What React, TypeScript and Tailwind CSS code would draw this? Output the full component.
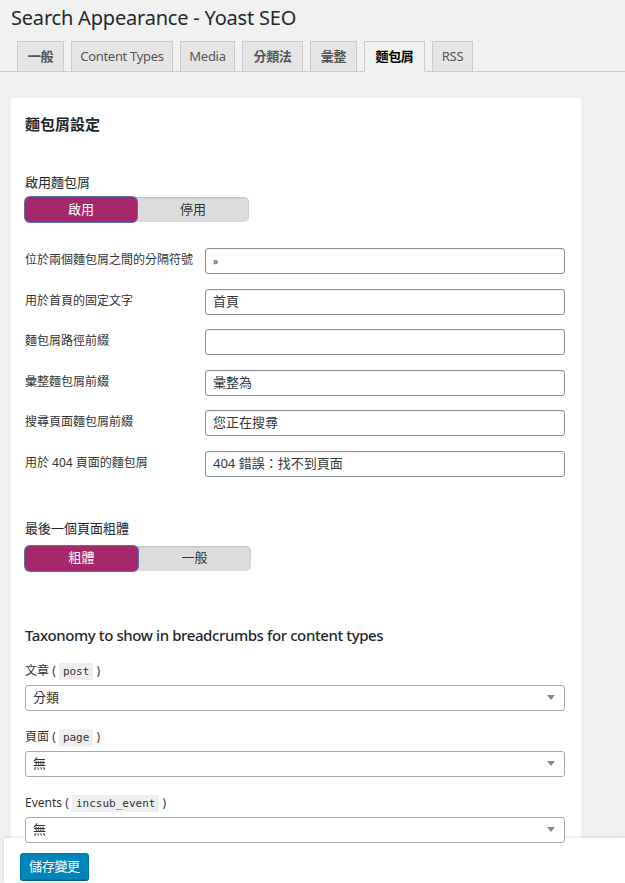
import clsx from 'clsx'

const cjk = "font-['Segoe_UI','Noto_Sans','Noto_Sans_CJK_TC',sans-serif]"

const tabs = [
  { t: '一般', w: 'w-[47px]' },
  { t: 'Content Types', w: 'w-[102px]' },
  { t: 'Media', w: 'w-[55px]' },
  { t: '分類法', w: 'w-[61px]' },
  { t: '彙整', w: 'w-[47px]' },
  { t: '麵包屑', w: 'w-[61px]' },
  { t: 'RSS', w: 'w-[41px]' },
]

const textRows = [
  { label: '位於兩個麵包屑之間的分隔符號', value: '»', small: true },
  { label: '用於首頁的固定文字', value: '首頁' },
  { label: '麵包屑路徑前綴', value: '' },
  { label: '彙整麵包屑前綴', value: '彙整為' },
  { label: '搜尋頁面麵包屑前綴', value: '您正在搜尋' },
  { label: '用於 404 頁面的麵包屑', value: '404 錯誤：找不到頁面' },
]

const selects = [
  { label: '文章', code: 'post', value: '分類' },
  { label: '頁面', code: 'page', value: '無' },
  { label: 'Events', code: 'incsub_event', value: '無' },
]

const Toggle = ({ on, off, width }: { on: string; off: string; width: string }) => (
  <div className={clsx('flex h-[25px] rounded-[5px] bg-[#dcdcdc] text-[13px] shadow-[inset_0_1px_2px_rgba(0,0,0,0.15)]', width)}>
    <div className="flex w-1/2 items-center justify-center rounded-[5px] bg-[#a4286a] text-white shadow-[0_0_0_1px_#5b6fb3]">{on}</div>
    <div className="flex w-1/2 items-center justify-center text-[#333]">{off}</div>
  </div>
)

const App = () => {
  return (
    <div className={clsx('flex h-[883px] flex-col overflow-hidden bg-[#f1f1f1] text-[#23282d]', cjk)}>
      <div className="min-h-0 flex-1">
        <h1 className="pl-[11px] pt-[4px] text-[20px] leading-[27px] font-normal tracking-[-0.2px] text-[#23282d]">Search Appearance - Yoast SEO</h1>
        <div className="mt-[10px] flex gap-[7px] border-b border-[#ccc] pl-[17px]">
          {tabs.map(({ t, w }) => (
            <div
              key={t}
              className={clsx(
                '-mb-px flex h-[31px] items-center justify-center border border-[#ccc] text-[13px] tracking-[-0.3px]',
                w,
                t === '麵包屑' ? 'border-b-[#f1f1f1] bg-[#f1f1f1] font-bold text-black' : 'bg-[#e5e5e5] text-[#555]',
                /[一-龥]/.test(t) && t !== '麵包屑' && 'font-semibold'
              )}
            >
              {t}
            </div>
          ))}
        </div>
        <div className="ml-[11px] mt-[26px] w-[570px] bg-white px-[14px] pt-[16px] pb-[80px]">
          <h2 className="text-[15px] leading-5 font-bold text-[#23282d]">麵包屑設定</h2>
          <div className="mt-[40px] text-[13px] leading-4">啟用麵包屑</div>
          <div className="mt-[7px]">
            <Toggle on="啟用" off="停用" width="w-[224px]" />
          </div>
          <div className="mt-[26px] flex flex-col gap-[14.5px]">
            {textRows.map((r) => (
              <div key={r.label} className="flex items-start">
                <div className="w-[180px] pt-[4px] text-[12px] leading-4 text-[#333]">{r.label}</div>
                <div className="flex h-[26px] w-[360px] items-center rounded-[3px] border border-[#8c8f94] bg-white px-[7px] text-[13px] text-[#32373c] shadow-[inset_0_1px_2px_rgba(0,0,0,0.07)]">
                  <span className={clsx(r.small && 'text-[10px]')}>{r.value}</span>
                </div>
              </div>
            ))}
          </div>
          <div className="mt-[43px] text-[13px] leading-4">最後一個頁面粗體</div>
          <div className="mt-[10px]">
            <Toggle on="粗體" off="一般" width="w-[226px]" />
          </div>
          <h2 className="mt-[54px] text-[15px] leading-5 font-medium tracking-[-0.4px] text-[#23282d]">Taxonomy to show in breadcrumbs for content types</h2>
          <div className="mt-[16px] flex flex-col gap-[16px]">
            {selects.map((s) => (
              <div key={s.code}>
                <div className="text-[12px] leading-[20px] text-[#333]">
                  {s.label} ({' '}
                  <code className="bg-[#eeeeee] px-[4px] py-[2px] font-['DejaVu_Sans_Mono',monospace] text-[11px] text-[#333]">{s.code}</code>{' '}
                  )
                </div>
                <div className="relative z-10 mt-[3px] flex h-[26px] w-[540px] items-center justify-between rounded-[3px] border border-[#aaa] bg-white px-[7px] text-[13px] text-[#333]">
                  <span>{s.value}</span>
                  <svg width="8" height="5" viewBox="0 0 8 5" className="mr-[2px]">
                    <path d="M0 0h8L4 5z" fill="#888" />
                  </svg>
                </div>
              </div>
            ))}
          </div>
        </div>
      </div>
      <div className="relative ml-[4px] flex h-[45px] shrink-0 items-start bg-white pl-[16px] pt-[15px] shadow-[0_-1px_3px_rgba(0,0,0,0.12)]">
        <button className="flex h-[27px] items-center rounded-[3px] border border-[#0073aa] bg-[#0085ba] px-[8px] text-[13px] tracking-[-0.3px] text-white shadow-[0_1px_0_#006799]">
          儲存變更
        </button>
      </div>
    </div>
  )
}

export default App
